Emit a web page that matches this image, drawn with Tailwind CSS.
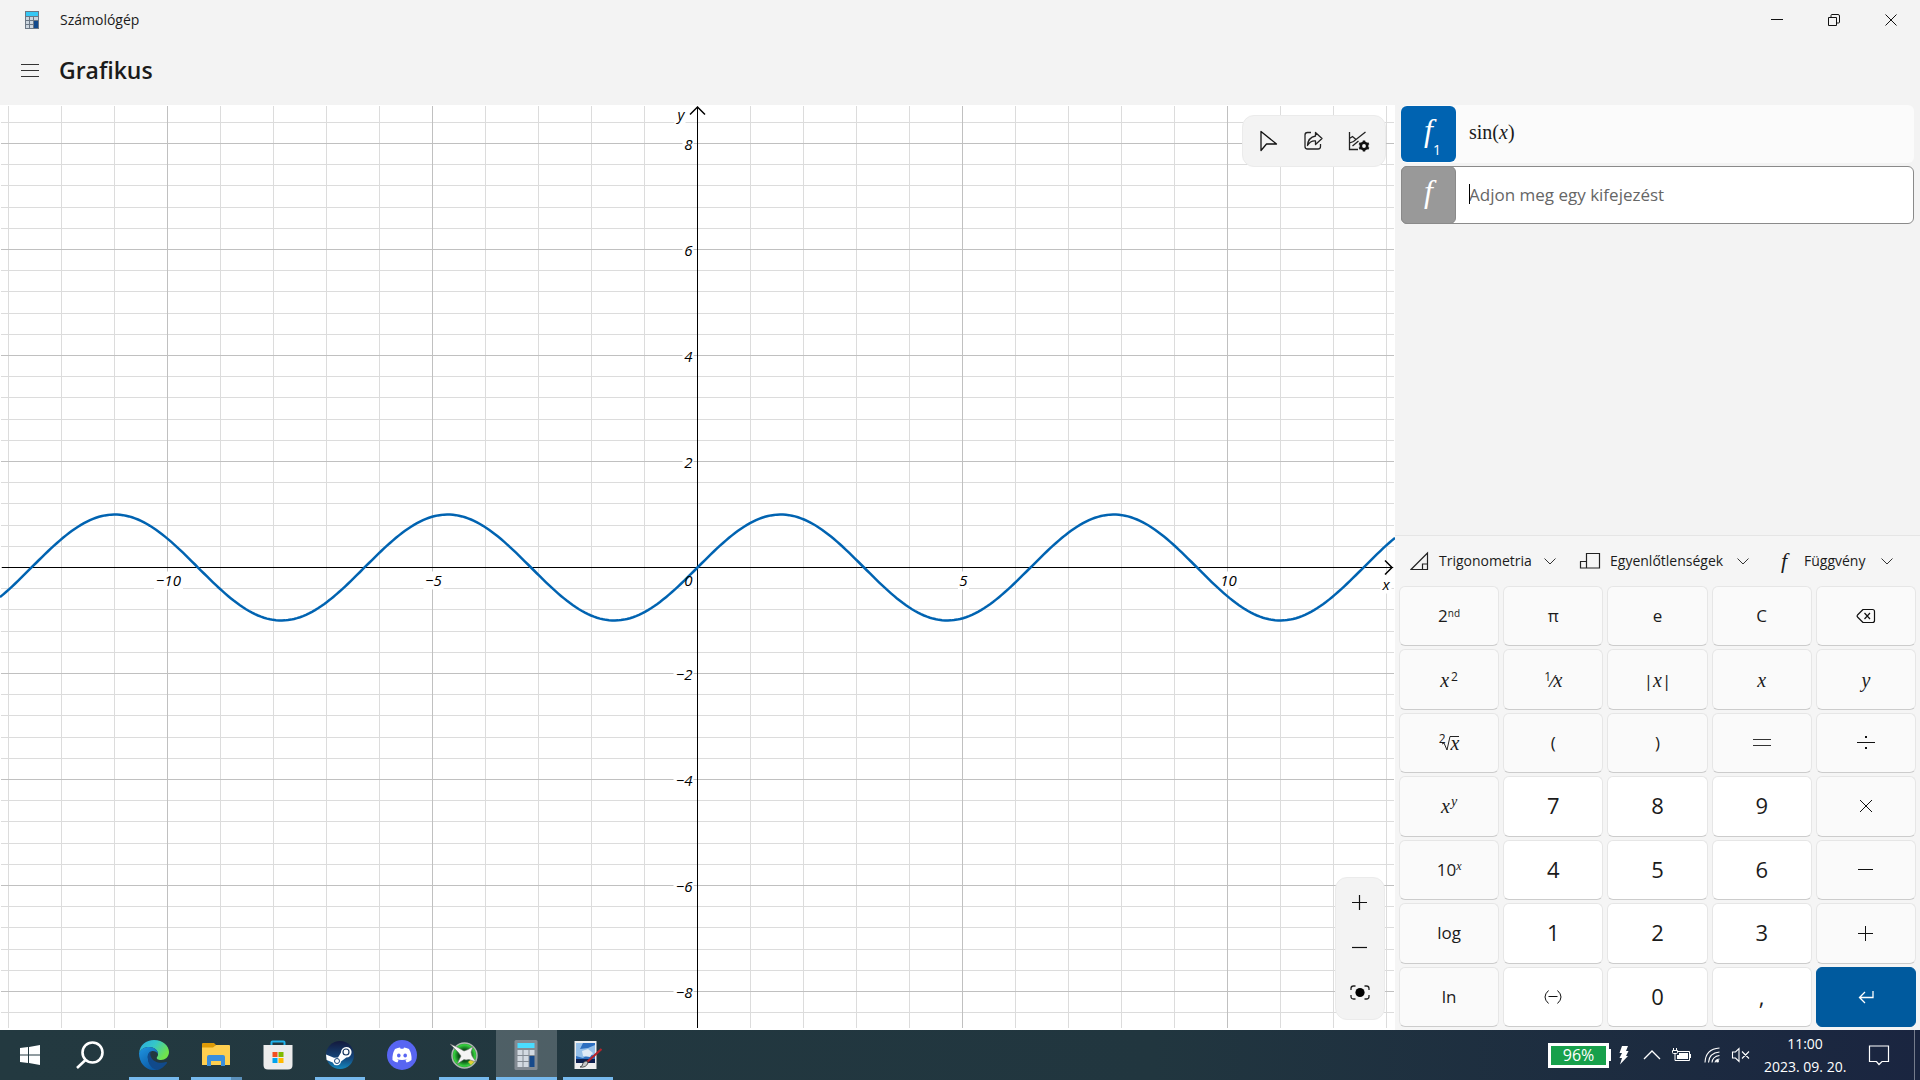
<!DOCTYPE html>
<html lang="hu">
<head>
<meta charset="utf-8">
<title>Számológép</title>
<script src="https://cdn.jsdelivr.net/npm/@tailwindcss/browser@4"></script>
</head>
<body class="flex h-screen flex-col overflow-hidden bg-[#f3f3f3] font-['Open_Sans',sans-serif] text-[#1b1b1b]">

<header class="flex h-[105px] shrink-0 flex-col">
  <div class="flex h-10 items-center">
    <svg class="ml-6 h-5 w-4" viewBox="0 0 16 20"><rect x="1" y="1" width="14" height="18" fill="#6b7785"/><rect x="2" y="2" width="12" height="4" fill="#35c8f5"/><g fill="#ccd6df"><path d="M2 7h3v3H2zM6 7h3v3H6zM10 7h4v3h-4zM2 11h3v3H2zM6 11h3v3H6zM2 15h3v3H2zM6 15h3v3H6z"/></g><path d="M10 11h4v7h-4z" fill="#11498c"/></svg>
    <span class="ml-5 text-sm leading-5">Számológép</span>
    <div class="ml-auto flex h-full">
      <button aria-label="Kis méret" class="flex w-[57px] items-center justify-center"><svg class="size-3" viewBox="0 0 12 12" fill="none" stroke="#111"><path d="M0 5.500h12"/></svg></button>
      <button aria-label="Visszaállítás" class="flex w-[57px] items-center justify-center"><svg class="size-3" viewBox="0 0 12 12" fill="none" stroke="#111"><path d="M.5 3.500h8v8h-8zM3 3.500v-2q0-1 1-1h6q1.500 0 1.500 1.500v6q0 1-1 1h-2"/></svg></button>
      <button aria-label="Bezárás" class="flex w-[58px] items-center justify-center"><svg class="size-3" viewBox="0 0 12 12" fill="none" stroke="#111"><path d="M.5.500l11 11M11.500.500l-11 11"/></svg></button>
    </div>
  </div>
  <div class="flex h-[60px] items-center">
    <button aria-label="Navigáció" class="ml-[21px]"><svg class="h-4 w-[18px]" viewBox="0 0 18 16" stroke="#333" fill="none"><path d="M0 2.500h18M0 8.500h18M0 14.500h18"/></svg></button>
    <h1 class="ml-5 text-[23px] leading-8 font-semibold">Grafikus</h1>
  </div>
</header>

<main class="flex min-h-0 flex-1">
  <section class="relative min-w-0 flex-1 bg-white" aria-label="Grafikon">
    <svg id="plot" class="block size-full text-[15px] italic"></svg>

    <div class="absolute top-[10px] right-[9px] flex h-[52px] w-[144px] items-center justify-center rounded-xl border border-[#ebebeb] bg-[#f3f3f3]">
      <button aria-label="Nyomkövetés" class="flex w-[45px] justify-center"><svg class="size-6" viewBox="0 0 24 24" fill="none" stroke="#111" stroke-width="1.300" stroke-linejoin="round"><path d="M4 2.500v19l5.500-6.500h10z"/></svg></button>
      <button aria-label="Megosztás" class="flex w-[45px] justify-center"><svg class="size-6" viewBox="0 0 24 24" fill="none" stroke="#222" stroke-width="1.300" stroke-linejoin="round"><path d="M9 3.500H5.500Q3 3.500 3 6v11.500Q3 20 5.500 20H16q2.500 0 2.500-2.500V15M13.500 3.500l6.500 6-6.500 6v-3.500q-5-.5-8 4.500.5-8 8-9.500z"/></svg></button>
      <button aria-label="Grafikon beállításai" class="flex w-[45px] justify-center"><svg class="size-6" viewBox="0 0 24 24" fill="none" stroke="#222" stroke-width="1.300"><path d="M2.500 3v17.500H11M2.500 14l4-1.500L18.500 3M2.500 9.500l3-2L9 10.500M5.500 17l6-5"/><circle cx="17" cy="17" r="3.200" stroke="#111" stroke-width="2.600"/><path d="M17 11.500v2M17 20.500v2M12.200 14.200l1.800 1M20 18.800l1.800 1M12.200 19.800l1.800-1M20 15.200l1.800-1" stroke="#111" stroke-width="2.400"/></svg></button>
    </div>

    <div class="absolute right-[10px] bottom-[10px] flex h-[143px] w-[50px] flex-col items-center rounded-xl border border-[#ebebeb] bg-[#f3f3f3]">
      <button aria-label="Nagyítás" class="mt-px flex h-[45px] items-center"><svg class="size-[18px]" viewBox="0 0 18 18" fill="none" stroke="#111" stroke-width="1.200"><path d="M1 9.500h15M8.500 2v15"/></svg></button>
      <button aria-label="Kicsinyítés" class="flex h-[45px] items-center"><svg class="size-[18px]" viewBox="0 0 18 18" fill="none" stroke="#111" stroke-width="1.200"><path d="M1 9.500h15"/></svg></button>
      <button aria-label="Nézet visszaállítása" class="flex h-[45px] items-center"><svg class="size-5" viewBox="0 0 20 20" fill="none" stroke="#222" stroke-width="1.300"><circle cx="10" cy="10.500" r="4.600" fill="#000" stroke="none"/><path d="M1 8V6.500Q1 4 3.500 4h2M14.500 4h2Q19 4 19 6.500V8M19 13v1.500q0 2.500-2.500 2.500h-2M5.500 17h-2Q1 17 1 14.500V13"/></svg></button>
    </div>
  </section>

  <aside class="flex w-[525px] shrink-0 flex-col">
    <div class="flex flex-1 flex-col gap-[3px] pr-[6px] pl-[6px]">
      <div class="flex h-[58px] rounded-md bg-[#fbfbfb]">
        <button aria-label="f1" class="flex h-[56px] w-[55px] items-center justify-center self-center rounded-md bg-[#0063b1] pb-2 pl-2 font-['Liberation_Serif',serif] text-[32px] leading-8 text-white italic"><span>f</span><sub class="pt-8 font-['Open_Sans',sans-serif] text-sm leading-4 not-italic">1</sub></button>
        <span class="self-center pb-1 pl-[13px] font-['Liberation_Serif',serif] text-xl leading-6">sin(<i>x</i>)</span>
      </div>
      <div class="relative flex h-[58px] rounded-md border border-[#8a8a8a] bg-white">
        <button aria-label="f" class="-my-px -ml-px flex w-[55px] items-center justify-center rounded-md border border-[#8a8a8a] bg-[#999999] pb-2 font-['Liberation_Serif',serif] text-[32px] leading-8 text-white italic">f</button>
        <input aria-label="Kifejezés" placeholder="Adjon meg egy kifejezést" class="min-w-0 flex-1 bg-transparent pl-[13px] text-[17px] outline-none placeholder:text-[#666]">
        <span class="absolute top-[17px] left-[67px] h-5 w-px bg-black"></span>
      </div>
    </div>

    <div class="border-t border-[#e5e5e5] bg-[#f5f5f5] px-1 pb-[3px]">
      <div class="flex h-[50px] items-center pl-[11px] text-sm leading-5">
        <button class="flex items-center"><svg class="size-5 shrink-0" viewBox="0 0 20 20" fill="none" stroke="#222" stroke-width="1.200"><path d="M1 18.500L17.500 2v16.500zM12.500 18v-5h5"/></svg><span class="w-[114px] pl-[9px] text-left">Trigonometria</span><svg class="h-2 w-3" viewBox="0 0 12 8" fill="none" stroke="#333"><path d="M.5 1.500L6 7l5.500-5.500"/></svg></button>
        <button class="ml-[23px] flex items-center"><svg class="h-5 w-[22px]" viewBox="0 0 22 20" fill="none" stroke="#222" stroke-width="1.200"><path d="M7.500 2.500h13v14.500h-13zM1 10.500h6.500M1.500 10.500V17h6"/></svg><span class="w-[136px] pl-[9px] text-left">Egyenlőtlenségek</span><svg class="h-2 w-3" viewBox="0 0 12 8" fill="none" stroke="#333"><path d="M.5 1.500L6 7l5.500-5.500"/></svg></button>
        <button class="ml-7 flex items-center"><span class="w-[14px] font-['Liberation_Serif',serif] text-[22px] leading-5 italic">f</span><span class="w-[90px] pl-[13px] text-left">Függvény</span><svg class="h-2 w-3" viewBox="0 0 12 8" fill="none" stroke="#333"><path d="M.5 1.500L6 7l5.500-5.500"/></svg></button>
      </div>
      <div class="grid h-[441px] grid-cols-5 grid-rows-7 gap-x-1 gap-y-[3px] text-[17px] leading-6 [&>button]:flex [&>button]:items-center [&>button]:justify-center [&>button]:rounded-md [&>button]:border [&>button]:border-[#e6e6e6] [&>button]:border-b-[#cccccc] [&_i]:font-['Liberation_Serif',serif] [&_sup]:text-xs [&_sup]:leading-3">
        <button class="bg-[#fafafa]"><span>2<sup class="text-[10px]!">nd</sup></span></button>
        <button class="bg-[#fafafa]">π</button>
        <button class="bg-[#fafafa]">e</button>
        <button class="bg-[#fafafa]">C</button>
        <button class="bg-[#fafafa]" aria-label="Törlés"><svg class="h-4 w-5" viewBox="0 0 20 16" fill="none" stroke="#111" stroke-width="1.200" stroke-linejoin="round"><path d="M7 1.500h9.500q2 0 2 2v9q0 2-2 2H7L1.500 9q-.8-1 0-2zM8.500 5l5.500 6M14 5l-5.500 6"/></svg></button>

        <button class="bg-[#fafafa]"><span><i class="text-xl">x</i><sup class="pl-[2px]">2</sup></span></button>
        <button class="bg-[#fafafa]"><span><sup>1</sup>⁄<i class="text-xl">x</i></span></button>
        <button class="bg-[#fafafa]"><span>|<i class="text-xl">x</i>|</span></button>
        <button class="bg-[#fafafa]"><i class="text-xl">x</i></button>
        <button class="bg-[#fafafa]"><i class="text-xl">y</i></button>

        <button class="bg-[#fafafa]"><span class="pb-2 text-xs leading-3">2</span><svg class="-ml-1 h-5 w-[9px]" viewBox="0 0 9 20" fill="none" stroke="#222"><path d="M0 11l2-1 3 7L8 3.500h1"/></svg><i class="border-t border-[#222] text-xl leading-[13px]">x</i></button>
        <button class="bg-[#fafafa]">(</button>
        <button class="bg-[#fafafa]">)</button>
        <button class="bg-[#fafafa]" aria-label="="><svg class="h-[10px] w-[18px]" viewBox="0 0 18 10" stroke="#333" fill="none"><path d="M0 1.500h18M0 7.500h18"/></svg></button>
        <button class="bg-[#fafafa]" aria-label="÷"><svg class="h-4 w-[18px]" viewBox="0 0 18 16" stroke="#111" fill="none"><path d="M0 7.500h18"/><path d="M8 2h2M8 13h2" stroke-width="2"/></svg></button>

        <button class="bg-[#fafafa]"><span><i class="text-xl">x</i><sup class="pl-px text-sm!"><i>y</i></sup></span></button>
        <button class="bg-white pb-[2px] text-[22px]">7</button>
        <button class="bg-white pb-[2px] text-[22px]">8</button>
        <button class="bg-white pb-[2px] text-[22px]">9</button>
        <button class="bg-[#fafafa]" aria-label="×"><svg class="size-[14px]" viewBox="0 0 14 14" stroke="#111" fill="none"><path d="M1 1l12 12M13 1L1 13"/></svg></button>

        <button class="bg-[#fafafa]"><span>10<sup><i>x</i></sup></span></button>
        <button class="bg-white pb-[2px] text-[22px]">4</button>
        <button class="bg-white pb-[2px] text-[22px]">5</button>
        <button class="bg-white pb-[2px] text-[22px]">6</button>
        <button class="bg-[#fafafa]" aria-label="−"><svg class="size-[15px]" viewBox="0 0 15 15" stroke="#111" fill="none"><path d="M0 7.500h15"/></svg></button>

        <button class="bg-[#fafafa]">log</button>
        <button class="bg-white pb-[2px] text-[22px]">1</button>
        <button class="bg-white pb-[2px] text-[22px]">2</button>
        <button class="bg-white pb-[2px] text-[22px]">3</button>
        <button class="bg-[#fafafa]" aria-label="+"><svg class="size-[15px]" viewBox="0 0 15 15" stroke="#111" fill="none"><path d="M0 7.500h15M7.500 0v15"/></svg></button>

        <button class="bg-[#fafafa]">ln</button>
        <button class="bg-white" aria-label="(−)"><svg class="h-4 w-[18px]" viewBox="0 0 18 16" stroke="#111" fill="none"><path d="M4.500 1.500Q-2.500 8 4.500 14.500M13.500 1.500Q20.500 8 13.500 14.500M4.500 7.500h9"/></svg></button>
        <button class="bg-white pb-[2px] text-[22px]">0</button>
        <button class="bg-white pb-[2px] text-[22px]">,</button>
        <button class="border-[#005a9e]! bg-[#005a9e]" aria-label="Enter"><svg class="size-4" viewBox="0 0 16 16" stroke="#fff" stroke-width="1.300" fill="none"><path d="M15 2v6.500H1.500M7 3L1.500 8.500 7 14"/></svg></button>
      </div>
    </div>
  </aside>
</main>

<footer class="flex h-[50px] shrink-0 bg-linear-to-r from-[#233940] via-[#21363f] via-60% to-[#1a2540] text-white">
  <nav class="flex [&>button]:relative [&>button]:flex [&>button]:items-center [&>button]:justify-center">
    <button aria-label="Start" class="w-[60px]"><svg class="size-5" viewBox="0 0 20 20" fill="#fff"><path d="M0 3l8-1v7.500H0zM9 1.900L20 0v9.500H9zM0 10.500h8V18l-8-1zM9 10.500h11V20L9 18.100z"/></svg></button>
    <button aria-label="Keresés" class="mr-[3px] w-[60px]"><svg class="size-7" viewBox="0 0 28 28" fill="none" stroke="#fff" stroke-width="2.600"><circle cx="16.500" cy="11.500" r="10"/><path d="M9.500 19L1 27"/></svg></button>
    <button aria-label="Edge" class="w-[62px]">
      <svg class="size-[30px]" viewBox="0 0 30 30"><defs><linearGradient id="e1" x1="0" y1="0" x2="1" y2=".5"><stop offset="0" stop-color="#2aa9e0"/><stop offset=".5" stop-color="#35c6c9"/><stop offset="1" stop-color="#70e34b"/></linearGradient><linearGradient id="e2" x1="0" y1="0" x2=".6" y2="1"><stop offset="0" stop-color="#1f96e2"/><stop offset="1" stop-color="#0c59a4"/></linearGradient></defs><path d="M0 13C1 5 7 0 15 0c9 0 15 6 15 12 0 5-4 8-8 8-3 0-5-1-4-3 1-1 1-2 1-3 0-4-4-7-9-7-4 0-8 2-10 6z" fill="url(#e1)"/><path d="M0 13c2-4 6-6 10-6 5 0 9 3 9 7-1-2-3-3-5-3-3 0-6 3-5 8 1 6 6 10 11 10-9 4-20-3-20-16z" fill="url(#e2)"/><path d="M9 19c-1-4 1-7 3-8-1 2-1 4 0 6 2 5 9 7 15 5 1 0 1 0 1 1-3 4-7 7-10 7-5-1-9-6-9-11z" fill="#114a8b"/></svg>
      <span class="absolute inset-x-[6px] bottom-0 h-[3px] bg-[#76b9ed]"></span>
    </button>
    <button aria-label="Fájlkezelő" class="w-[62px]">
      <svg class="h-6 w-7" viewBox="0 0 28 24"><path d="M0 1q0-1 1-1h11l2 2-2 3H0z" fill="#dd9a06"/><path d="M0 4.500h11L14 2h13q1 0 1 1v19H0z" fill="#ffcf4f"/><path d="M5 23V14q0-2 2-2h14q2 0 2 2v9h-4v-5H9v5z" fill="#3b8edb"/></svg>
      <span class="absolute right-4 bottom-0 left-[6px] h-[3px] bg-[#76b9ed]"></span><span class="absolute right-[5px] bottom-0 h-[3px] w-[11px] bg-[#5a8fb9]"></span>
    </button>
    <button aria-label="Store" class="w-[62px]"><svg class="size-[30px]" viewBox="0 0 30 30"><path d="M8.500 7V2.500q0-1 1-1h11q1 0 1 1V7" fill="none" stroke="#21b3ec" stroke-width="2"/><path d="M.5 5h29v20q0 4.500-4.500 4.500H5Q.5 29.500.5 25z" fill="#ececec"/><path d="M9.500 12h5v5h-5z" fill="#f25022"/><path d="M15.500 12h5v5h-5z" fill="#7fba00"/><path d="M9.500 18h5v5h-5z" fill="#00a4ef"/><path d="M15.500 18h5v5h-5z" fill="#ffb900"/></svg></button>
    <button aria-label="Steam" class="w-[62px]">
      <svg class="size-7" viewBox="0 0 28 28"><defs><linearGradient id="s1" x1="0" y1="0" x2="0" y2="1"><stop offset="0" stop-color="#141a3c"/><stop offset=".6" stop-color="#15457a"/><stop offset="1" stop-color="#1487bd"/></linearGradient></defs><circle cx="14" cy="14" r="14" fill="url(#s1)"/><path d="M0 13.500l8 3.300 4-.3 3-5a5.300 5.300 0 1 1 5.300 5l-5.300 4a4.300 4.300 0 0 1-8.300 1L.6 19z" fill="#fff"/><circle cx="20" cy="11" r="3" fill="#fff" stroke="#17365f" stroke-width="1.200"/><circle cx="11" cy="20" r="2.500" fill="none" stroke="#17457a"/></svg>
      <span class="absolute inset-x-[6px] bottom-0 h-[3px] bg-[#76b9ed]"></span>
    </button>
    <button aria-label="Discord" class="w-[62px]"><svg class="size-[30px]" viewBox="0 0 30 30"><circle cx="15" cy="15" r="15" fill="#5865f2"/><path d="M8 9q3-1.500 5-1.500l.6 1.200h2.800l.6-1.200q2 0 5 1.500 3 5 2.500 11-2.500 2-5 2.500L18.500 20q1-.3 2-1-5.500 2-11 0 1 .7 2 1l-1 2.500Q8 22 5.500 20 5 14 8 9z" fill="#fff"/><ellipse cx="11.800" cy="15.500" rx="1.800" ry="2" fill="#5865f2"/><ellipse cx="18.200" cy="15.500" rx="1.800" ry="2" fill="#5865f2"/></svg></button>
    <button aria-label="Afterburner" class="w-[62px]">
      <svg class="size-7" viewBox="0 0 28 28"><defs><radialGradient id="m1"><stop offset="0" stop-color="#031a06"/><stop offset=".5" stop-color="#0d5a1a"/><stop offset=".85" stop-color="#37d33f"/><stop offset="1" stop-color="#2b8a35"/></radialGradient></defs><circle cx="14.500" cy="14.500" r="12.500" fill="url(#m1)" stroke="#aeb8b1" stroke-width="1.500"/><path d="M18 21l5-4 2 3-4 4z" fill="#e3cf35"/><path d="M0 3l7 3 7 4 4-1.500 5-3-2 5.500 1 4 4 6-7-2.500-3 .5-2-.5-7 4.500 4-8-3-4z" fill="#f4f4f4" stroke="#6a6a6a" stroke-width=".6"/></svg>
      <span class="absolute inset-x-[6px] bottom-0 h-[3px] bg-[#76b9ed]"></span>
    </button>
    <button aria-label="Számológép" class="w-[62px]"><span class="absolute inset-y-0 right-0 left-px bg-white/20"></span>
      <svg class="relative h-[30px] w-6" viewBox="0 0 24 30"><rect x=".5" width="23" height="30" rx="1.500" fill="#838b93"/><path d="M3.500 3h17v5h-17z" fill="#4adcff"/><path d="M3.500 10h5v5h-5zM9.500 10h5v5h-5zM15.500 10h5v5h-5zM3.500 16h5v5h-5zM9.500 16h5v5h-5zM3.500 22h5v5h-5zM9.500 22h5v5h-5z" fill="#d3dae1"/><path d="M15.500 16h5v11h-5z" fill="#174a8b"/></svg>
      <span class="absolute right-0 bottom-0 left-px h-[3px] bg-[#76b9ed]"></span>
    </button>
    <button aria-label="Paint" class="w-[62px]">
      <svg class="h-[30px] w-7" viewBox="0 0 28 30"><path d="M.5 1h22v28H.5z" fill="#efefef"/><path d="M2 3h19v17H2z" fill="#2d6fc0"/><path d="M2 3h7l-3 6 8-1 7-3v11l-6-2-6 4-7-2z" fill="#94bfe9"/><path d="M8 11l6-2 5 4-3 4-7-1z" fill="#dfeaf6"/><path d="M2 19h19v4H2z" fill="#0d1f4e"/><path d="M27.500 9L12 23" stroke="#b5242c" stroke-width="2.200"/><path d="M13 21q-4 0-5 5l-2 1q6 1 8-4z" fill="#c7c7c7" stroke="#333" stroke-width=".8"/></svg>
      <span class="absolute inset-x-[6px] bottom-0 h-[3px] bg-[#76b9ed]"></span>
    </button>
  </nav>
  <div class="ml-auto flex items-center">
    <div class="flex items-center"><span class="flex h-[25px] w-[61px] items-center justify-center border-3 border-white bg-[#17a04b] text-base leading-5">96%</span><span class="h-3 w-[2px] bg-white"></span></div>
    <svg class="ml-[7px] h-5 w-3" viewBox="0 0 12 20" fill="#fff"><path d="M4 1h6L8 6h2.500L8 11h2L2 19.500 4 13H1.500L4 8H1.500z"/></svg>
    <button aria-label="Rejtett ikonok" class="ml-3"><svg class="h-4 w-5" viewBox="0 0 20 16" fill="none" stroke="#fff" stroke-width="1.300"><path d="M2 12l8-8 8 8"/></svg></button>
    <svg class="ml-[10px] h-4 w-5" viewBox="0 0 20 16" fill="none" stroke="#fff"><path d="M5.500 4.500h12v9H3M18.500 7v4M1.500 1v2.500M4.500 1v2.500M.5 3.500h5v2q0 1-1 1h-3q-1 0-1-1zM3 7v6.500"/><path d="M7 6h9v6H5V8h2z" fill="#fff" stroke="none"/></svg>
    <svg class="ml-3 size-4" viewBox="0 0 16 16" fill="none" stroke="#fff" stroke-width="1.100"><path d="M1 15.500Q1.500 2 15.500 1M4.500 15.500q.5-9.500 11-10.500M8 15.500q.5-6 7.500-7M11 15.500q.5-3 4.500-3.500" /><circle cx="13.500" cy="14" r="1.500" fill="#fff" stroke="none"/></svg>
    <svg class="ml-[11px] h-4 w-5" viewBox="0 0 20 16" fill="none" stroke="#fff" stroke-width="1.100"><path d="M1.500 5h3L8 1.500v13L4.500 11h-3zM11 4.500l7 7M18 4.500l-7 7"/></svg>
    <div class="ml-[13px] w-[82px] text-center text-sm leading-[23px]"><div>11:00</div><div class="whitespace-nowrap">2023. 09. 20.</div></div>
    <button aria-label="Értesítések" class="ml-[22px]"><svg class="size-[22px]" viewBox="0 0 22 22" fill="none" stroke="#fff" stroke-width="1.200"><path d="M1.500 2h19v15.500H14L11 20.500 8.500 17.500h-7z"/></svg></button>
    <span class="mr-[5px] ml-6 h-[50px] w-px bg-white/40"></span>
  </div>
</footer>

<script>
const svg = document.getElementById('plot');
const unit = 53;

function draw() {
  const box = svg.parentElement;
  const w = box.clientWidth, h = box.clientHeight;
  const cx = w / 2, cy = h / 2;
  const line = (x1, y1, x2, y2, c) => `<path d="M${x1} ${y1}L${x2} ${y2}" stroke="${c}"/>`;
  let minor = '', major = '', masks = '', labels = '';

  for (let i = Math.ceil(-cx / unit); i * unit < cx; i++) {
    const x = Math.round(cx + i * unit - 0.5) + 0.5;
    if (i % 5) minor += line(x, 1, x, h - 2, '#dcdcdc');
    else major += line(x, 1, x, h - 2, '#c0c0c0');
  }
  for (let j = Math.ceil(-cy / (unit * 0.4)); j * unit * 0.4 < cy; j++) {
    const y = Math.round(cy + j * unit * 0.4 - 0.5) + 0.5;
    if (j % 5) minor += line(1, y, w - 1, y, '#dcdcdc');
    else major += line(1, y, w - 1, y, '#c0c0c0');
  }
  const label = (s, x, y, anchor) => {
    const tw = s.length * 9 + 2;
    const left = anchor === 'end' ? x - tw + 1 : x - tw / 2;
    masks += `<rect x="${left}" y="${y - 14}" width="${tw}" height="18" fill="#fff"/>`;
    labels += `<text x="${x}" y="${y}" text-anchor="${anchor}">${s}</text>`;
  };
  for (const v of [-10, -5, 5, 10]) label(String(v).replace('-', '−'), cx + v * unit + 1, cy + 18, 'middle');
  for (const v of [8, 6, 4, 2, -2, -4, -6, -8]) label(String(v).replace('-', '−'), cx - 5, cy - v * unit + 6, 'end');
  label('0', cx - 5, cy + 18, 'end');
  label('y', cx - 13, 15, 'end');
  label('x', w - 9, cy + 22, 'middle');

  let d = '';
  for (let x = 0; x <= w; x += 3) d += `${x ? 'L' : 'M'}${x} ${(cy - unit * Math.sin((x - cx) / unit)).toFixed(2)}`;

  svg.innerHTML = `<g fill="none">${minor}${major}</g>${masks}
    <g fill="none" stroke="#000"><path d="M2 ${cy}H${w - 2}M${cx} 2V${h - 2}" shape-rendering="crispEdges"/>
    <path d="M${cx - 7.5} 9.500L${cx} 2L${cx + 7.5} 9.500M${w - 10} ${cy - 7}L${w - 3} ${cy}L${w - 10} ${cy + 7}" stroke-width="1.500"/></g>
    <path d="${d}" fill="none" stroke="#0063b1" stroke-width="2.500"/><g fill="#000">${labels}</g>`;
}
draw();
new ResizeObserver(draw).observe(svg.parentElement);
addEventListener('load', draw);
</script>
</body>
</html>
